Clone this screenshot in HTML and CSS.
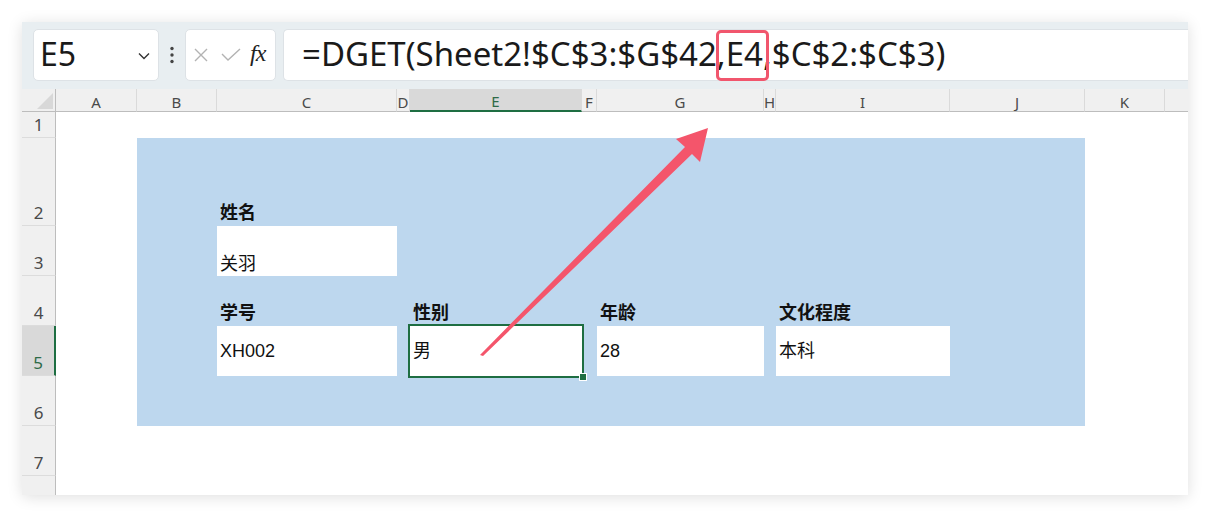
FILE: index.html
```html
<!DOCTYPE html>
<html lang="zh">
<head>
<meta charset="utf-8">
<title>DGET</title>
<link rel="stylesheet" href="styles.css">
</head>
<body>
<div class="window">
  <div class="toolbar">
    <div class="namebox">
      <span class="nb-text">E5</span>
      <svg class="chev" width="12" height="8" viewBox="0 0 12 8"><polyline points="1,1.5 6,6.5 11,1.5" fill="none" stroke="#333" stroke-width="1.4"/></svg>
    </div>
    <div class="dots">
      <svg width="6" height="18" viewBox="0 0 6 18"><circle cx="3" cy="2.5" r="1.7" fill="#444"/><circle cx="3" cy="9" r="1.7" fill="#444"/><circle cx="3" cy="15.5" r="1.7" fill="#444"/></svg>
    </div>
    <div class="fxbox">
      <svg class="ico-x" width="16" height="16" viewBox="0 0 16 16"><path d="M2 2 L14 14 M14 2 L2 14" stroke="#b3b3b3" stroke-width="1.4" fill="none"/></svg>
      <svg class="ico-ok" width="20" height="14" viewBox="0 0 20 14"><polyline points="1,6 7,12 19,1" fill="none" stroke="#b3b3b3" stroke-width="1.4"/></svg>
      <span class="fx">fx</span>
    </div>
    <div class="formula">=DGET(Sheet2!$C$3:$G$42,<span class="hl">E4</span>,$C$2:$C$3)</div>
  </div>
  <div class="sheet">
    <div class="corner"><span class="tri"></span></div>
    <div class="ch">A</div>
    <div class="ch">B</div>
    <div class="ch">C</div>
    <div class="ch">D</div>
    <div class="ch sel">E</div>
    <div class="ch">F</div>
    <div class="ch">G</div>
    <div class="ch">H</div>
    <div class="ch">I</div>
    <div class="ch">J</div>
    <div class="ch">K</div>
    <div class="ch last"></div>

    <div class="rh r1">1</div>
    <div class="rh r2">2</div>
    <div class="rh r3">3</div>
    <div class="rh r4">4</div>
    <div class="rh r5 sel">5</div>
    <div class="rh r6">6</div>
    <div class="rh r7">7</div>
    <div class="rh r8"></div>

    <div class="blue"></div>

    <div class="lbl r2 cC">姓名</div>
    <div class="val bottom r3 cC">关羽</div>

    <div class="lbl r4 cC">学号</div>
    <div class="val r5 cC">XH002</div>

    <div class="lbl r4 cE">性别</div>
    <div class="val r5 cE active">男</div>

    <div class="lbl r4 cG">年龄</div>
    <div class="val r5 cG">28</div>

    <div class="lbl r4 cI">文化程度</div>
    <div class="val r5 cI">本科</div>
  </div>
</div>
<svg class="arrow" width="1211" height="518" viewBox="0 0 1211 518">
  <polygon points="480,355 483,356 692,154 700,162 708,128 676,139 685,147" fill="#f4556b"/>
</svg>
</body>
</html>
```
FILE: styles.css
```css
html, body {
  margin: 0;
  padding: 0;
  background: #ffffff;
}
body {
  position: relative;
  width: 1211px;
  height: 518px;
  overflow: hidden;
  font-family: "Noto Sans", "Noto Sans CJK SC", sans-serif;
}
.window {
  position: absolute;
  left: 22px;
  top: 22px;
  width: 1166px;
  height: 473px;
  background: #ffffff;
  box-shadow: 0 2px 14px rgba(0, 0, 0, 0.13);
  overflow: hidden;
}
.toolbar {
  height: 67px;
  box-sizing: border-box;
  padding: 7px 0 8px 11px;
  background: #e8eef1;
  display: flex;
}
.namebox {
  width: 126px;
  box-sizing: border-box;
  background: #fff;
  border: 1px solid #dde2e6;
  border-radius: 5px;
  display: flex;
  align-items: center;
  justify-content: space-between;
  padding: 0 8px 0 6px;
}
.nb-text {
  font-size: 32px;
  color: #1a1a1a;
  line-height: 1;
  padding-bottom: 2px;
}
.chev {
  margin-top: 2px;
}
.dots {
  width: 26px;
  display: flex;
  align-items: center;
  justify-content: center;
}
.fxbox {
  width: 91px;
  box-sizing: border-box;
  background: #fff;
  border: 1px solid #dde2e6;
  border-radius: 5px;
  display: flex;
  align-items: center;
  padding-left: 7px;
}
.ico-x {
  margin-right: 12px;
}
.ico-ok {
  margin-right: 9px;
}
.fx {
  font-family: "Liberation Serif", "DejaVu Serif", serif;
  font-style: italic;
  font-size: 24px;
  color: #222;
  letter-spacing: -1px;
  padding-bottom: 4px;
}
.formula {
  flex: 1;
  margin-left: 7px;
  background: #fff;
  border: 1px solid #dde2e6;
  border-right: none;
  border-radius: 5px 0 0 5px;
  display: flex;
  align-items: center;
  padding-left: 18px;
  font-size: 33px;
  color: #1a1a1a;
  white-space: pre;
  padding-bottom: 3px;
  box-sizing: border-box;
}
.hl {
  position: relative;
}
.hl::after {
  content: "";
  position: absolute;
  left: -10px;
  right: -6px;
  top: -1px;
  bottom: -5px;
  border: 3px solid #f1566d;
  border-radius: 5px;
}
.sheet {
  display: grid;
  grid-template-columns: 34px 81px 80px 180px 13px 172px 15px 167px 12px 174px 135px 80px 23px;
  grid-template-rows: 23px 26px 88px 50px 50px 50px 50px 50px 19px;
  font-family: "Liberation Sans", "Noto Sans CJK SC", sans-serif;
}
.corner {
  grid-column: 1;
  grid-row: 1;
  background: #f0f0f0;
  border-right: 1px solid #bdbdbd;
  border-bottom: 1px solid #bdbdbd;
  box-sizing: border-box;
  position: relative;
}
.tri {
  position: absolute;
  right: 2px;
  bottom: 2px;
  width: 0;
  height: 0;
  border-left: 16px solid transparent;
  border-bottom: 16px solid #d8d8d8;
}
.ch {
  grid-row: 1;
  background: #f0f0f0;
  border-right: 1px solid #dadada;
  border-bottom: 1px solid #bdbdbd;
  box-sizing: border-box;
  font-family: "Noto Sans", sans-serif;
  font-size: 15px;
  color: #4a4a4a;
  display: flex;
  align-items: center;
  justify-content: center;
  padding-top: 3px;
  overflow: hidden;
}
.ch.sel {
  background: #d9d9d9;
  border-bottom: 2px solid #1e6e42;
  color: #2f6b48;
}
.ch.last {
  border-right: none;
}
.rh {
  grid-column: 1;
  background: #f0f0f0;
  border-right: 1px solid #bdbdbd;
  border-bottom: 1px solid #dcdcdc;
  box-sizing: border-box;
  font-family: "Noto Sans", sans-serif;
  font-size: 17px;
  color: #4a4a4a;
  display: flex;
  align-items: flex-end;
  justify-content: center;
  padding-bottom: 1px;
}
.rh.sel {
  background: #d9d9d9;
  border-right: 2px solid #1e6e42;
  color: #2f6b48;
}
.rh.r8 {
  border-bottom: none;
}
.r1 { grid-row: 2; }
.r2 { grid-row: 3; }
.r3 { grid-row: 4; }
.r4 { grid-row: 5; }
.r5 { grid-row: 6; }
.r6 { grid-row: 7; }
.r7 { grid-row: 8; }
.r8 { grid-row: 9; }
.cC { grid-column: 4; }
.cE { grid-column: 6; }
.cG { grid-column: 8; }
.cI { grid-column: 10; }
.blue {
  grid-column: 3 / 12;
  grid-row: 3 / 8;
  background: #bdd7ee;
}
.lbl {
  font-weight: bold;
  font-size: 18px;
  color: #111;
  display: flex;
  align-items: flex-end;
  padding: 0 0 4px 3px;
  line-height: 1;
}
.val {
  background: #ffffff;
  font-size: 18px;
  color: #111;
  display: flex;
  align-items: center;
  padding-left: 3px;
  line-height: 1;
}
.val.bottom {
  align-items: flex-end;
  padding-bottom: 3px;
}
.val.active {
  position: relative;
  outline: 2px solid #1e6e42;
  outline-offset: 0px;
  z-index: 1;
}
.val.active::after {
  content: "";
  position: absolute;
  right: -5px;
  bottom: -5px;
  width: 6px;
  height: 6px;
  background: #1e6e42;
  border: 1px solid #fff;
}
.arrow {
  position: absolute;
  left: 0;
  top: 0;
  z-index: 5;
  pointer-events: none;
}
```
